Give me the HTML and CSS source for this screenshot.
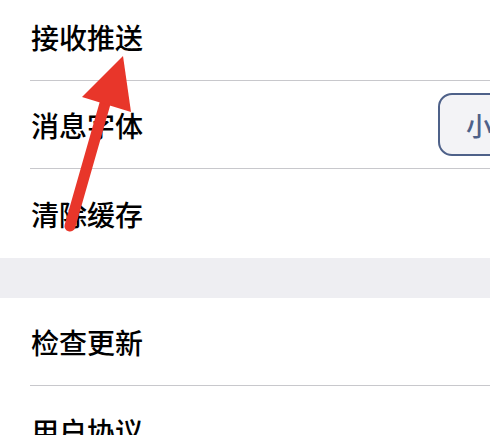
FILE: index.html
```html
<!DOCTYPE html>
<html>
<head>
    <title>设置</title>
    <link rel="stylesheet" href="styles.css">
</head>
<body>
    <div class="settings">
        <div class="group first">
            <div class="row"><span class="label">接收推送</span></div>
            <div class="row">
                <span class="label">消息字体</span>
                <button class="size-btn">小</button>
            </div>
            <div class="row last"><span class="label">清除缓存</span></div>
        </div>
        <div class="gap"></div>
        <div class="group">
            <div class="row"><span class="label">检查更新</span></div>
            <div class="row last"><span class="label">用户协议</span></div>
        </div>
    </div>

    <!-- red annotation arrow -->
    <svg class="arrow" width="490" height="435" viewBox="0 0 490 435">
        <line x1="70" y1="226" x2="106" y2="100" stroke="#e8362a" stroke-width="11" stroke-linecap="round"/>
        <polygon points="123,56 82,97 131,112" fill="#e8362a"/>
    </svg>
</body>
</html>
```

FILE: styles.css
```css
body {
    margin: 0;
    background: #ffffff;
    font-family: "Noto Sans CJK SC", "Noto Sans", sans-serif;
    overflow: hidden;
}
.settings {
    margin-top: -7px;
}
.group {
    background: #ffffff;
}
.row {
    margin-left: 30px;
    height: 87px;
    border-bottom: 1px solid #c8c8cc;
    display: flex;
    align-items: center;
}
.row.last {
    border-bottom: none;
    height: 89px;
}
.label {
    font-size: 28px;
    font-weight: 500;
    color: #000000;
    padding-left: 1px;
}
.size-btn {
    margin-left: auto;
    margin-right: -38px;
    flex-shrink: 0;
    width: 90px;
    height: 63px;
    box-sizing: border-box;
    border: 2px solid #4e6189;
    border-radius: 14px;
    background: #f3f3f6;
    color: #4e6189;
    font-family: "Noto Sans CJK SC", sans-serif;
    font-size: 26px;
    font-weight: 500;
    text-align: left;
    padding: 0 0 0 26px;
}
.gap {
    height: 40px;
    background: #eeeef2;
}
.arrow {
    position: absolute;
    left: 0;
    top: 0;
}
```
